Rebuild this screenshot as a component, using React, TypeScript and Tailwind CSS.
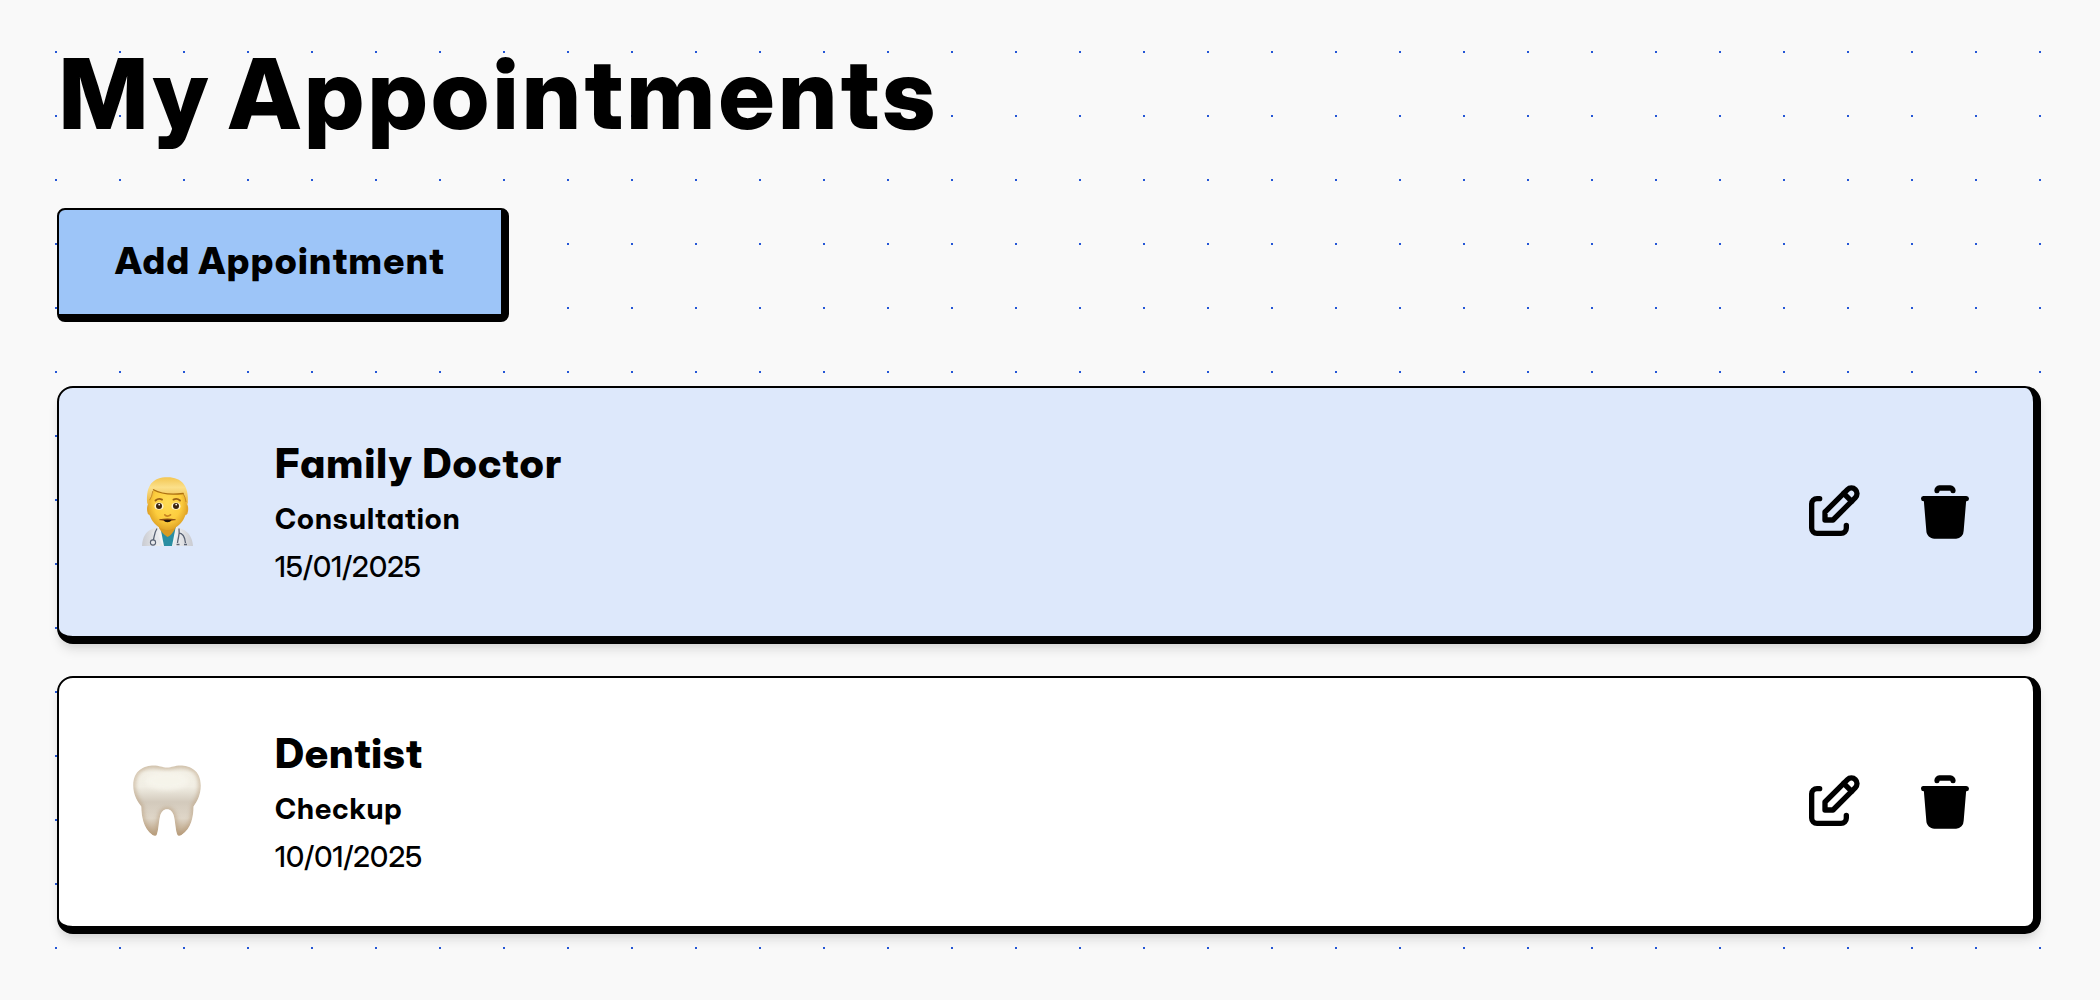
type Appointment = {
  title: string;
  kind: string;
  date: string;
  surface: string;
  tracking: string;
  Icon: () => React.ReactElement;
};

function DoctorIcon() {
  return (
    <svg viewBox="0 0 72 72" className="mb-0.5 size-[72px]" aria-hidden="true">
      <defs>
        <radialGradient id="face" cx="50%" cy="45%" r="60%">
          <stop offset="0" stopColor="#ffdc55" />
          <stop offset="0.6" stopColor="#fdcd3e" />
          <stop offset="1" stopColor="#d99a20" />
        </radialGradient>
        <linearGradient id="hair" x1="0" y1="0" x2="0" y2="1">
          <stop offset="0" stopColor="#f3c652" />
          <stop offset="0.35" stopColor="#fbe08a" />
          <stop offset="1" stopColor="#e9ad2d" />
        </linearGradient>
        <linearGradient id="coat" x1="0" y1="0" x2="1" y2="0">
          <stop offset="0" stopColor="#c9cbd1" />
          <stop offset="0.4" stopColor="#f4f5f6" />
          <stop offset="0.6" stopColor="#f4f5f6" />
          <stop offset="1" stopColor="#c9cbd1" />
        </linearGradient>
      </defs>
      <path d="M11 71C11.500 62 15 56.500 20 54.500L28 51H44L52 54.500C57.500 57 61.500 62.500 62 71Z" fill="url(#coat)" />
      <path d="M29 50.500L33 71H41L45 50.500Z" fill="#2a8ea2" />
      <path d="M28 45H44.500V53Q41 60 36.500 62Q31.500 59 28 53Z" fill="#d99b22" />
      <path d="M28 51L25 57L32 71H29L21 58Z" fill="#e6e8ec" />
      <path d="M45 51L48 57L41 71H44L52 58Z" fill="#e6e8ec" />
      <ellipse cx="18.400" cy="34" rx="2.400" ry="6" fill="#e2a42b" />
      <ellipse cx="54.800" cy="34" rx="2.400" ry="6" fill="#e2a42b" />
      <path d="M17.500 20C17.500 9 25 5 36.500 5S55.500 9 55.500 21V34C55 46 45 55 36.500 55S18 46 17.500 34Z" fill="url(#face)" />
      <path d="M16.200 28C14.800 10 22 2.300 36.500 2.300S58 11 56.800 28L55.200 31Q55.200 22 52.200 18.500C40 20 29 18.500 22.500 14.800Q21.500 22 18.500 25L17.700 31Z" fill="url(#hair)" />
      <path d="M22.500 14.800C29 18.500 40 20 52.200 18.500" fill="none" stroke="#ad7011" strokeWidth="1.300" strokeLinecap="round" />
      <path d="M21.800 16Q21 22 18.500 25.200M52.400 19Q54.300 22 55 27" fill="none" stroke="#c38621" strokeWidth="0.900" />
      <path d="M24.500 25.500Q27.500 22.800 31 24.600M42.500 24.600Q46 22.800 49 25.500" fill="none" stroke="#9c6114" strokeWidth="1.900" strokeLinecap="round" />
      <ellipse cx="28" cy="31.200" rx="4.500" ry="3.600" fill="#fff4cf" />
      <ellipse cx="45" cy="31.200" rx="4.500" ry="3.600" fill="#fff4cf" />
      <circle cx="28" cy="31" r="3" fill="#3b230d" />
      <circle cx="45" cy="31" r="3" fill="#3b230d" />
      <circle cx="28.200" cy="29.600" r="0.900" fill="#fff" />
      <circle cx="45.200" cy="29.600" r="0.900" fill="#fff" />
      <path d="M33.800 39.800Q36.500 42.300 39.500 39.800" fill="none" stroke="#c98420" strokeWidth="1.700" strokeLinecap="round" />
      <path d="M28.500 44.800Q36.500 43.300 44.500 44.800Q36.500 47.800 28.500 44.800Z" fill="#b06a1c" />
      <path d="M28.800 44.700Q36.500 43.600 44.200 44.700" fill="none" stroke="#8a4c14" strokeWidth="1.100" strokeLinecap="round" />
      <path d="M32.500 45Q36.500 44.600 40.500 45Q39.500 47.200 36.500 47.200T32.500 45Z" fill="#20130b" />
      <path d="M26 53.500C23 58 23.500 62 22 66M48 53.500C49 60 47 62 46.500 68M47.500 58Q53.500 58 54.500 68" fill="none" stroke="#596273" strokeWidth="1.300" />
      <circle cx="22" cy="67.500" r="2.600" fill="#e7e9ec" stroke="#596273" strokeWidth="1.100" />
      <path d="M45.500 69.500H48.500M53 69.500H56" stroke="#596273" strokeWidth="1.500" />
    </svg>
  );
}

function ToothIcon() {
  const outline =
    "M22.500 4.500C29 4.500 31 6.500 36 6.500S43 4.500 49.500 4.500C58.500 4.500 69.800 9 69.800 24.500C69.800 34 66 40.500 62.500 45.500C62.500 55 60.500 67.500 50.500 74Q48.500 75.500 46.600 74.200C44.500 70 44.500 62 43 55.500C42 51 39.500 48.300 36 48.300S30 51 29 55.500C27.500 62 27.500 70 25.500 74.200Q23.500 75.500 21.500 74C12 67 10.500 55 10.300 45.500C6.500 40.500 2.200 34 2.200 24.500C2.200 9 13.500 4.500 22.500 4.500Z";
  return (
    <svg viewBox="0 0 72 78" className="mb-1 h-[78px] w-[72px]" aria-hidden="true">
      <defs>
        <linearGradient id="enamel" x1="0" y1="0" x2="0" y2="1">
          <stop offset="0" stopColor="#e7e2d5" />
          <stop offset="0.1" stopColor="#f3f0e6" />
          <stop offset="0.3" stopColor="#f1eee4" />
          <stop offset="0.52" stopColor="#d3cabc" />
          <stop offset="0.75" stopColor="#dfd6c8" />
          <stop offset="1" stopColor="#b79c7b" />
        </linearGradient>
        <filter id="soft" x="-20%" y="-20%" width="140%" height="140%">
          <feGaussianBlur stdDeviation="2" />
        </filter>
        <clipPath id="tooth">
          <path d={outline} />
        </clipPath>
      </defs>
      <g clipPath="url(#tooth)">
        <path d={outline} fill="url(#enamel)" />
        <path d={outline} fill="none" stroke="#b89d7d" strokeWidth="3.500" opacity="0.75" filter="url(#soft)" />
        <ellipse cx="36" cy="20" rx="22" ry="9" fill="#f7f5ec" opacity="0.8" filter="url(#soft)" />
      </g>
    </svg>
  );
}

function EditIcon() {
  return (
    <svg
      viewBox="0 0 24 24"
      className="size-16"
      fill="none"
      stroke="currentColor"
      strokeWidth="2"
      strokeLinecap="round"
      strokeLinejoin="round"
      aria-hidden="true"
    >
      <path d="M7 7h-1a2 2 0 0 0 -2 2v9a2 2 0 0 0 2 2h9a2 2 0 0 0 2 -2v-1" />
      <path d="M20.385 6.585a2.100 2.100 0 0 0 -2.970 -2.970l-8.415 8.385v3h3l8.385 -8.415z" />
      <path d="M16 5l3 3" />
    </svg>
  );
}

function TrashIcon() {
  return (
    <svg viewBox="0 0 24 24" className="size-16" fill="currentColor" aria-hidden="true">
      <path d="M20 6a1 1 0 0 1 .117 1.993l-.117 .007h-.081l-.919 11a3 3 0 0 1 -2.824 2.995l-.176 .005h-8c-1.598 0 -2.904 -1.249 -2.992 -2.750l-.005 -.167l-.923 -11.083h-.080a1 1 0 0 1 -.117 -1.993l.117 -.007h16z" />
      <path d="M14 2a2 2 0 0 1 2 2a1 1 0 0 1 -1.993 .117l-.007 -.117h-4l-.007 .117a1 1 0 0 1 -1.993 -.117a2 2 0 0 1 1.850 -1.995l.150 -.005h4z" />
    </svg>
  );
}

const appointments: Appointment[] = [
  {
    title: "Family Doctor",
    kind: "Consultation",
    date: "15/01/2025",
    surface: "bg-[#dde8fb]",
    tracking: "tracking-[1.15px]",
    Icon: DoctorIcon,
  },
  {
    title: "Dentist",
    kind: "Checkup",
    date: "10/01/2025",
    surface: "bg-white",
    tracking: "tracking-[0.8px]",
    Icon: ToothIcon,
  },
];

function AppointmentCard({ title, kind, date, surface, tracking, Icon }: Appointment) {
  return (
    <article
      className={`flex h-[258px] items-center rounded-2xl border-2 border-r-8 border-b-8 border-black pr-14 pl-[72px] shadow-[0_8px_12px_-2px_rgba(0,0,0,0.1),0_4px_8px_-4px_rgba(0,0,0,0.1)] ${surface}`}
    >
      <div className="mr-[72px] flex w-[72px] justify-center">
        <Icon />
      </div>
      <div className="flex-1 pb-0.5">
        <h2 className={`text-[41px] leading-[56px] font-extrabold ${tracking}`}>{title}</h2>
        <p className="text-[29px] leading-[55px] font-bold tracking-[1px]">{kind}</p>
        <p className="text-[29px] leading-[41px] font-medium tracking-[0.15px]">{date}</p>
      </div>
      <div className="flex gap-12">
        <button aria-label="Edit">
          <EditIcon />
        </button>
        <button aria-label="Delete">
          <TrashIcon />
        </button>
      </div>
    </article>
  );
}

export default function App() {
  return (
    <main className="min-h-screen bg-[#f9f9f9] bg-[conic-gradient(from_270deg_at_2px_2px,#2557d6_90deg,transparent_0)] bg-[length:64px_64px] bg-[position:55px_51px] pt-8 pr-[59px] pl-[57px] font-['Inter_Display','Inter',sans-serif] text-black [font-feature-settings:'cv11']">
      <h1 className="pl-0.5 text-[98px] leading-[124px] font-extrabold tracking-[3.6px] [word-spacing:-7px]">
        My Appointments
      </h1>
      <button className="mt-[52px] block h-[114px] w-[452px] rounded-lg border-2 border-r-8 border-b-8 border-black bg-[#9dc5f8] pb-[3px] text-[37px] font-extrabold tracking-[1.35px] [word-spacing:-1px]">
        Add Appointment
      </button>
      <section className="mt-16 flex flex-col gap-8">
        {appointments.map((item) => (
          <AppointmentCard key={item.title} {...item} />
        ))}
      </section>
    </main>
  );
}
